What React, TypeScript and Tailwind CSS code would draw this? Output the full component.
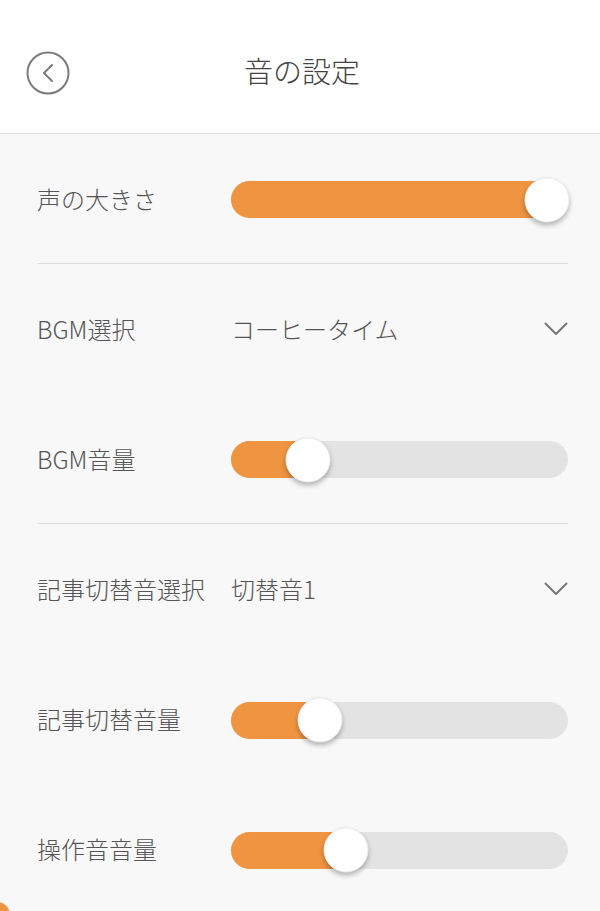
const FONT = { fontFamily: '"Noto Sans CJK JP", "Noto Sans", sans-serif' }

function BackIcon() {
  return (
    <svg width="44" height="44" viewBox="0 0 44 44" fill="none">
      <circle cx="22" cy="22" r="20.5" stroke="#7b7b7b" strokeWidth="2" />
      <path d="M26 14 L18 22 L26 30" stroke="#7b7b7b" strokeWidth="2" strokeLinecap="round" strokeLinejoin="round" />
    </svg>
  )
}

function ChevronDown() {
  return (
    <svg width="24" height="14" viewBox="0 0 24 14" fill="none">
      <path d="M1.5 1.5 L12 12 L22.5 1.5" stroke="#777" strokeWidth="2" strokeLinecap="round" strokeLinejoin="round" />
    </svg>
  )
}

// pos = thumb center in px from the track's left edge
function Slider({ pos }: { pos: number }) {
  return (
    <div className="relative flex-1 h-[37px] mt-[2px] rounded-full bg-[#e3e3e3]">
      <div className="h-full rounded-full bg-[#ef9441]" style={{ width: pos + 18 }} />
      <div
        className="absolute top-1/2 w-[45px] h-[45px] -translate-x-1/2 -translate-y-1/2 rounded-full bg-white shadow-[0_3px_5px_rgba(0,0,0,0.28)] border border-[#ececec]"
        style={{ left: pos }}
      />
    </div>
  )
}

function Row({ label, children, divider }: { label: string; children: React.ReactNode; divider?: boolean }) {
  return (
    <div className={`flex items-center h-[130px] ${divider ? 'border-b border-[#dedede]' : ''}`}>
      <div className="w-[194px] shrink-0 text-[24px] font-light text-[#555]">{label}</div>
      {children}
    </div>
  )
}

function Select({ value }: { value: string }) {
  return (
    <div className="flex flex-1 items-center justify-between">
      <span className="text-[24px] font-light text-[#555]">{value}</span>
      <ChevronDown />
    </div>
  )
}

export default function App() {
  return (
    <div className="relative w-[600px] h-[911px] overflow-hidden bg-[#f8f8f8]" style={FONT}>
      {/* Header */}
      <div className="relative flex items-center justify-center h-[134px] bg-white border-b border-[#dcdcdc]">
        <button className="absolute left-[26px] top-[51px]">
          <BackIcon />
        </button>
        <h1 className="text-[29px] font-light text-[#444] pl-[4px] mt-[8px]">音の設定</h1>
      </div>

      {/* Settings */}
      <div className="pl-[37px] pr-[32px]">
        <Row label="声の大きさ" divider>
          <Slider pos={316} />
        </Row>
        <Row label="BGM選択">
          <Select value="コーヒータイム" />
        </Row>
        <Row label="BGM音量" divider>
          <Slider pos={77} />
        </Row>
        <Row label="記事切替音選択">
          <Select value="切替音1" />
        </Row>
        <Row label="記事切替音量">
          <Slider pos={89} />
        </Row>
        <Row label="操作音音量">
          <Slider pos={115} />
        </Row>
      </div>

      {/* floating button peeking in */}
      <div className="absolute left-[-16px] top-[902px] w-[26px] h-[26px] rounded-full bg-[#ef9441]" />
    </div>
  )
}
